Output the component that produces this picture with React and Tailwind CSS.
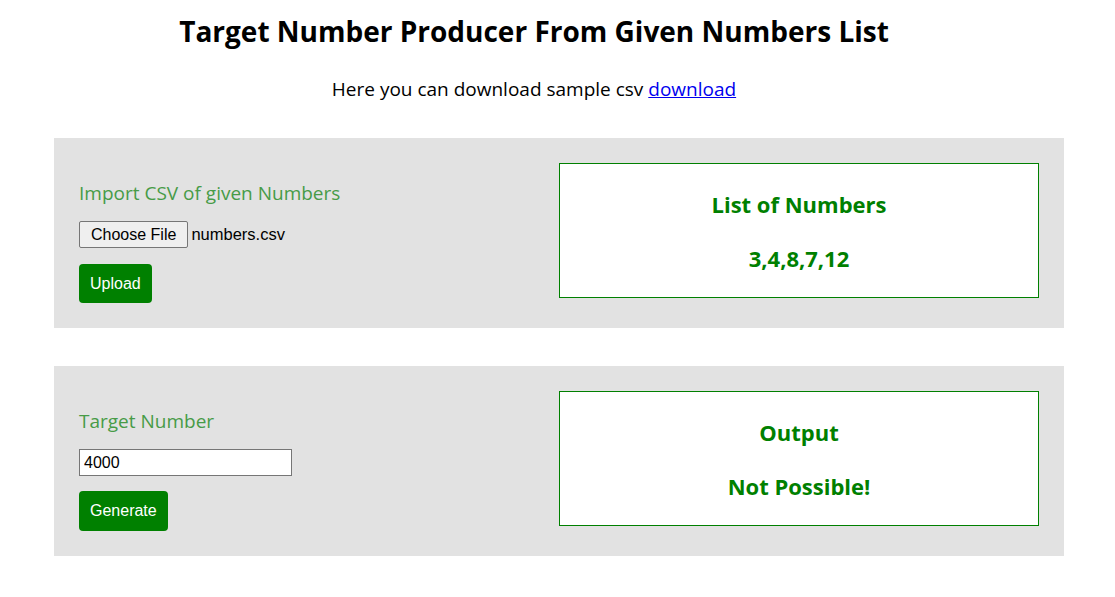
import React, { useState } from "react";

const font = { fontFamily: '"Open Sans", "Noto Sans", sans-serif' };
const arial = { fontFamily: '"Liberation Sans", Arial, sans-serif' };

const Panel = ({ children, result, title }) => {
    return (
        <div className="w-full flex flex-row justify-between items-start bg-[#e2e2e2] p-[25px]">
            <div className="flex flex-col items-start pt-[18px]">{children}</div>
            <div className="w-[480px] h-[135px] flex flex-col items-center bg-white border border-[#008000] pt-[27px] gap-[27px] text-[#008000] font-bold text-[22px] leading-[27px]">
                <h3>{title}</h3>
                <p>{result}</p>
            </div>
        </div>
    );
};

const App = () => {
    const [target, setTarget] = useState("4000");

    return (
        <div className="w-[1115px] min-h-[597px] bg-white text-black" style={font}>
            <div className="w-[1068px] flex flex-col items-center pt-[14px]">
                <h1 className="text-[28px] leading-[34px] font-bold">Target Number Producer From Given Numbers List</h1>
                <p className="mt-[29px] text-[19px] leading-[24px]">
                    Here you can download sample csv <a href="#" className="text-[#0000ee] underline">download</a>
                </p>
            </div>
            <div className="flex flex-col gap-[38px] ml-[54px] w-[1010px] mt-[37px]">
                <Panel title="List of Numbers" result="3,4,8,7,12">
                    <p className="text-[19px] leading-[24px] text-[#479b47]">Import CSV of given Numbers</p>
                    <div className="flex flex-row items-center mt-[16px] h-[27px]" style={arial}>
                        <button className="h-[27px] px-[11px] bg-[#efefef] border border-[#767676] rounded-[2px] text-[16px] text-black">Choose File</button>
                        <span className="ml-[3px] text-[16.5px] text-black">numbers.csv</span>
                    </div>
                    <button className="mt-[16px] h-[39px] px-[11px] bg-[#008000] rounded-[4px] text-white text-[16px]" style={arial}>Upload</button>
                </Panel>
                <Panel title="Output" result="Not Possible!">
                    <p className="text-[19px] leading-[24px] text-[#479b47]">Target Number</p>
                    <input
                        value={target}
                        onChange={(e) => setTarget(e.target.value)}
                        className="mt-[16px] w-[213px] h-[27px] px-[4px] bg-white border border-[#767676] text-[16px] text-black"
                        style={arial}
                    />
                    <button className="mt-[15px] h-[40px] px-[11px] bg-[#008000] rounded-[4px] text-white text-[16px]" style={arial}>Generate</button>
                </Panel>
            </div>
        </div>
    );
};

export default App;
